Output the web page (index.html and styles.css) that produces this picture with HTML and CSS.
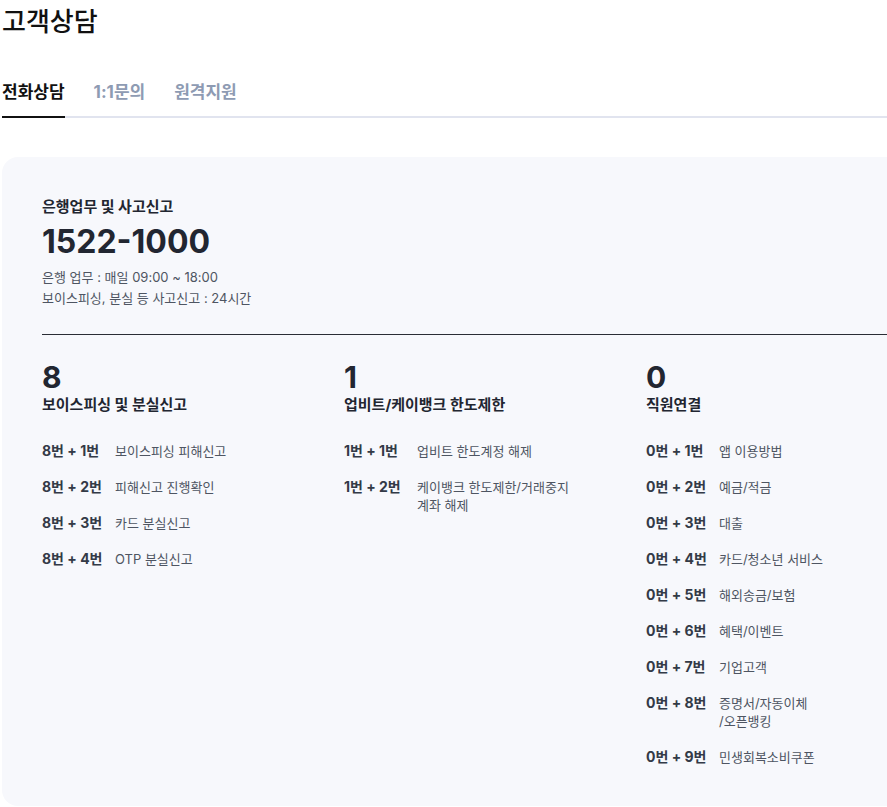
FILE: index.html
```html
<!DOCTYPE html>
<html lang="ko">
<head>
    <meta charset="UTF-8">
    <meta name="viewport" content="width=device-width, initial-scale=1.0">
    <title>고객상담</title>
    <link rel="stylesheet" href="styles.css">
</head>
<body>

<div class="page">
    <h1 class="page-title">고객상담</h1>

    <!-- 탭 -->
    <ul class="tabs">
        <li class="tab active">전화상담</li>
        <li class="tab">1:1문의</li>
        <li class="tab">원격지원</li>
    </ul>

    <!-- 전화상담 카드 -->
    <section class="call-card">
        <div class="call-main">
            <h2 class="call-label">은행업무 및 사고신고</h2>
            <p class="call-number">1522-1000</p>
            <p class="call-info">은행 업무 : 매일 09:00 ~ 18:00</p>
            <p class="call-info">보이스피싱, 분실 등 사고신고 : 24시간</p>
        </div>

        <div class="menu-grid">
            <div class="menu-col">
                <p class="menu-key">8</p>
                <h3 class="menu-title">보이스피싱 및 분실신고</h3>
                <ul class="menu-list">
                    <li><b>8번 + 1번</b><span>보이스피싱 피해신고</span></li>
                    <li><b>8번 + 2번</b><span>피해신고 진행확인</span></li>
                    <li><b>8번 + 3번</b><span>카드 분실신고</span></li>
                    <li><b>8번 + 4번</b><span>OTP 분실신고</span></li>
                </ul>
            </div>
            <div class="menu-col">
                <p class="menu-key">1</p>
                <h3 class="menu-title">업비트/케이뱅크 한도제한</h3>
                <ul class="menu-list">
                    <li><b>1번 + 1번</b><span>업비트 한도계정 해제</span></li>
                    <li><b>1번 + 2번</b><span>케이뱅크 한도제한/거래중지<br>계좌 해제</span></li>
                </ul>
            </div>
            <div class="menu-col">
                <p class="menu-key">0</p>
                <h3 class="menu-title">직원연결</h3>
                <ul class="menu-list">
                    <li><b>0번 + 1번</b><span>앱 이용방법</span></li>
                    <li><b>0번 + 2번</b><span>예금/적금</span></li>
                    <li><b>0번 + 3번</b><span>대출</span></li>
                    <li><b>0번 + 4번</b><span>카드/청소년 서비스</span></li>
                    <li><b>0번 + 5번</b><span>해외송금/보험</span></li>
                    <li><b>0번 + 6번</b><span>혜택/이벤트</span></li>
                    <li><b>0번 + 7번</b><span>기업고객</span></li>
                    <li><b>0번 + 8번</b><span>증명서/자동이체<br>/오픈뱅킹</span></li>
                    <li><b>0번 + 9번</b><span>민생회복소비쿠폰</span></li>
                </ul>
            </div>
        </div>
    </section>
</div>

</body>
</html>
```

FILE: styles.css
```css
body {
    margin: 0;
    padding: 0;
    font-family: Inter, "Noto Sans CJK KR", sans-serif;
    color: #1b1e26;
    background: #fff;
    overflow: hidden;
}

.page {
    width: 1000px;
    padding-left: 2px;
}

.page-title {
    margin: 4px 0 0;
    font-size: 26px;
    line-height: 36px;
    font-weight: 500;
    color: #111;
}

/* 탭 */
.tabs {
    display: flex;
    gap: 29px;
    list-style: none;
    margin: 40px 0 0;
    padding: 0;
    border-bottom: 2px solid #e1e4ef;
}

.tab {
    padding-bottom: 12px;
    margin-bottom: -2px;
    border-bottom: 2px solid transparent;
    font-size: 17px;
    line-height: 24px;
    font-weight: 700;
    color: #8e9bb3;
}

.tab.active {
    color: #111;
    border-bottom-color: #111;
}

/* 카드 */
.call-card {
    margin-top: 39px;
    padding: 39px 40px 40px;
    background: #f7f8fc;
    border-radius: 16px;
}

.call-label {
    margin: 0;
    font-size: 15px;
    line-height: 22px;
    font-weight: 700;
    color: #222631;
}

.call-number {
    margin: 4px 0 0;
    font-size: 32px;
    line-height: 40px;
    font-weight: 700;
    color: #222631;
}

.call-number + .call-info {
    margin-top: 5px;
}

.call-info {
    margin: 0;
    font-size: 13px;
    line-height: 21px;
    color: #4e5562;
}

.menu-grid {
    display: grid;
    grid-template-columns: repeat(3, 302px);
    margin-top: 25px;
    border-top: 1px solid #2a2d35;
}

.menu-key {
    margin: 25px 0 0;
    font-size: 30px;
    line-height: 34px;
    font-weight: 700;
    color: #222631;
}

.menu-title {
    margin: 0;
    font-size: 15px;
    line-height: 22px;
    font-weight: 700;
    color: #222631;
}

.menu-list {
    list-style: none;
    margin: 26px 0 0;
    padding: 0;
    display: flex;
    flex-direction: column;
    gap: 18px;
}

.menu-list li {
    display: grid;
    grid-template-columns: 73px 1fr;
    font-size: 13px;
    line-height: 18px;
}

.menu-list b {
    font-size: 14px;
    color: #333a47;
    font-weight: 700;
}

.menu-list span {
    color: #4e5562;
}
```
